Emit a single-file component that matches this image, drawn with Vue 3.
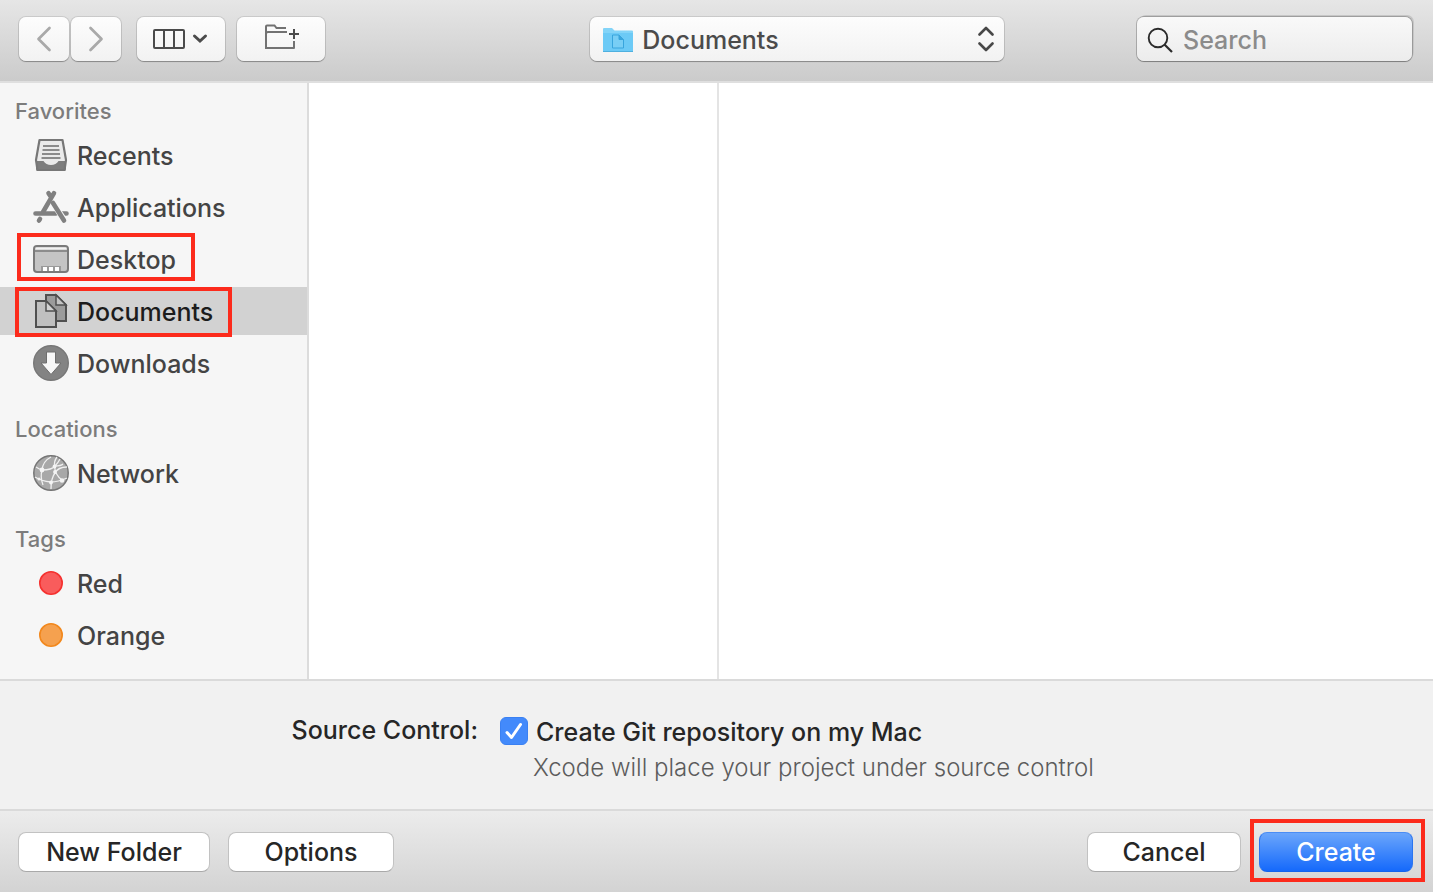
<template>
  <div class="dialog">
    <header class="toolbar">
      <div class="nav">
        <button type="button" class="tool nav-btn" aria-label="Back">
          <svg width="50" height="44" viewBox="0 0 50 44">
            <path d="M30.500 11 19.500 22l11 11" fill="none" stroke="#a9a9a9" stroke-width="2.700" stroke-linecap="round" stroke-linejoin="round" />
          </svg>
        </button>
        <button type="button" class="tool nav-btn" aria-label="Forward">
          <svg width="50" height="44" viewBox="0 0 50 44">
            <path d="M19.500 11 30.500 22l-11 11" fill="none" stroke="#a9a9a9" stroke-width="2.700" stroke-linecap="round" stroke-linejoin="round" />
          </svg>
        </button>
      </div>
      <button type="button" class="tool view-btn" aria-label="View as columns">
        <svg width="88" height="44" viewBox="0 0 88 44" fill="none" stroke="#4b4b4b" stroke-width="2">
          <rect x="17" y="13" width="30" height="18" rx="1" />
          <path d="M27 13v18M37 13v18" />
          <path d="M57.500 19l5.500 5 5.500-5" stroke-width="3" stroke-linecap="round" />
        </svg>
      </button>
      <button type="button" class="tool folder-btn" aria-label="New folder">
        <svg width="88" height="44" viewBox="0 0 88 44" fill="none" stroke="#727272" stroke-width="2">
          <path d="M29 32V9.500q0-1 1-1h7.500l2 2.500H49" />
          <path d="M29 17q0-2 2-2h19" />
          <path d="M29 31h28v-7" stroke-linejoin="round" />
          <path d="M57 12v10M52 17h10" stroke="#4b4b4b" />
        </svg>
      </button>

      <span class="spacer-left"></span>
      <div class="location">
        <svg class="location-icon" width="32" height="28" viewBox="0 0 32 28">
          <path d="M1 2q0-1 1-1h8l2.500 2.500H30q1 0 1 1V24q0 1-1 1H2q-1 0-1-1z" fill="#83d4f8" />
          <path d="M1 6h30v18q0 1-1 1H2q-1 0-1-1z" fill="#6ccaf6" />
          <path d="M1 24.500h30" stroke="#4fb0df" />
          <path d="M10.500 8h6.500l4.500 4.500V21h-11zM17 8v4.500h4.500" fill="#78cef5" stroke="#38a5dd" />
          <path d="M17 8l4.500 4.500H17z" fill="#38a5dd" />
        </svg>
        <select v-model="location" class="tool location-select" aria-label="Location">
          <option>Documents</option>
        </select>
        <svg class="location-arrows" width="16" height="26" viewBox="0 0 16 26">
          <path d="M1.500 8.500 8 2l6.500 6.500M1.500 17.500 8 24l6.500-6.500" fill="none" stroke="#484848" stroke-width="2.600" stroke-linecap="round" stroke-linejoin="round" />
        </svg>
      </div>
      <span class="spacer-right"></span>

      <div class="search">
        <svg class="search-icon" width="28" height="28" viewBox="0 0 28 28">
          <circle cx="11" cy="11" r="9.300" fill="none" stroke="#2b2b2b" stroke-width="1.900" />
          <path d="M17.500 17.500 25 25" stroke="#2b2b2b" stroke-width="2.200" />
        </svg>
        <input v-model="query" type="text" class="tool search-input" placeholder="Search" aria-label="Search" />
      </div>
    </header>

    <main class="browser">
      <nav class="sidebar">
        <section v-for="group in groups" :key="group.title" class="group">
          <h2>{{ group.title }}</h2>
          <a
            v-for="item in group.items"
            :key="item.name"
            href="#"
            class="item"
            :class="{ selected: item.name === location }"
          >
            <svg width="36" height="36" viewBox="0 0 36 36">
              <g v-if="item.icon === 'recents'">
                <path d="M7.500 3h21l3 19v10q0 1-1 1h-25q-1 0-1-1V22z" fill="#eaeaea" />
                <path d="M3 24h7.500q2.500 4 7.500 4t7.500-4H33v8l-1 2H4l-1-2z" fill="#7d7d7d" />
                <path d="M6.500 3h23L33 23l-1.500 10h-27L3 23z" fill="none" stroke="#777" stroke-width="2.200" stroke-linejoin="round" />
                <path d="M10 9h16M9.500 13h17M9 17h18M8.500 21h19" stroke="#8b8b8b" stroke-width="2" />
              </g>
              <g v-else-if="item.icon === 'applications'" fill="none" stroke="#808080" stroke-width="4.600" stroke-linecap="round">
                <path d="M2.500 24.500H23M29 24.500h4.500" />
                <path d="M19 12.500 31.500 31.500" stroke="#f6f6f6" stroke-width="6" stroke-linecap="butt" />
                <path d="M15.500 4.200l2 3M21 4.200 10 23M7 30l-1 1.500" />
                <path d="M20 14 31 31.500" />
              </g>
              <g v-else-if="item.icon === 'desktop'">
                <rect x="1" y="5" width="34" height="26" rx="3" fill="#c4c4c4" stroke="#7a7a7a" stroke-width="2" />
                <path d="M2.500 7.500h31" stroke="#f2f2f2" stroke-width="2" />
                <path d="M2 10h32" stroke="#7a7a7a" stroke-width="1.500" />
                <path d="M8 25h20v5H8z" fill="#9a9a9a" />
                <path d="M10 26h4v4h-4zM16 26h4v4h-4zM22 26h4v4h-4z" fill="#fff" />
              </g>
              <g v-else-if="item.icon === 'documents'" stroke="#505050" stroke-width="2">
                <path d="M13 2h10l10 10v16H13z" fill="#9b9b9b" />
                <path d="M23 2v10h10z" fill="#c4c4c4" stroke-width="1.500" />
                <path d="M3 8h10l10 10v16H3z" fill="#c0c0c0" />
                <path d="M13 8v10h10z" fill="#d2d2d2" stroke-width="1.500" />
              </g>
              <g v-else-if="item.icon === 'downloads'">
                <circle cx="18" cy="18" r="17.300" fill="#838383" stroke="#777" stroke-width="1.400" />
                <path d="M13.500 7h9v11h5.500L18 29.500 8 18h5.500z" fill="#f7f7f7" stroke="#6e6e6e" />
              </g>
              <g v-else-if="item.icon === 'network'">
                <circle cx="18" cy="18" r="17.200" fill="#a8a8a8" stroke="#757575" stroke-width="1.500" />
                <g fill="none" stroke="#f0f0f0" stroke-width="1.300">
                  <path d="M3 12q3 2 6 3Q10 6 18 2M9 15q10 0 13-4 3-3 5-7M9 15q-2 7 1 15M24 2q-3 4-2.500 9 .5 9 7.500 14M34 12q-9 0-12 6-4 5-4 16M2 22q6 4 16 5 7 0 16-4M22 11q6 0 8-2" />
                </g>
                <g fill="#f4f4f4">
                  <circle cx="9" cy="15" r="2.400" />
                  <circle cx="21.500" cy="11.500" r="1.900" />
                  <circle cx="22" cy="17" r="1.900" />
                  <circle cx="6" cy="24" r="1.500" />
                  <circle cx="18" cy="27.500" r="1.900" />
                  <circle cx="29" cy="25.500" r="2.300" />
                </g>
              </g>
              <circle v-else-if="item.icon === 'red'" cx="18" cy="18" r="11.200" fill="#f95c5c" stroke="#f5312f" stroke-width="1.600" />
              <circle v-else cx="18" cy="18" r="11.200" fill="#f5a14f" stroke="#f2881d" stroke-width="1.600" />
            </svg>
            <span class="item-name">{{ item.name }}</span>
            <i v-if="item.mark" class="mark" :class="item.mark"></i>
          </a>
        </section>
      </nav>
      <div class="column"></div>
      <div class="column rest"></div>
    </main>

    <section class="accessory">
      <span class="accessory-label">Source Control:</span>
      <div>
        <label class="check">
          <span class="check-box">
            <input v-model="createGit" type="checkbox" />
            <svg v-if="createGit" width="28" height="28" viewBox="0 0 28 28">
              <path d="M7 15.500l4.500 5L20.500 7.500" fill="none" stroke="#fff" stroke-width="3" stroke-linecap="round" stroke-linejoin="round" />
            </svg>
          </span>
          <span class="item-name">Create Git repository on my Mac</span>
        </label>
        <p class="hint">Xcode will place your project under source control</p>
      </div>
    </section>

    <footer class="actions">
      <button type="button" class="push new-folder">New Folder</button>
      <button type="button" class="push options">Options</button>
      <span class="fill"></span>
      <button type="button" class="push">Cancel</button>
      <div class="create-wrap">
        <button type="button" class="push primary">Create</button>
        <i class="mark mark-create"></i>
      </div>
    </footer>
  </div>
</template>

<script setup>
import {ref} from "vue";

const location = ref("Documents");
const query = ref("");
const createGit = ref(true);

const groups = [
  {
    title: "Favorites",
    items: [
      {name: "Recents", icon: "recents"},
      {name: "Applications", icon: "applications"},
      {name: "Desktop", icon: "desktop", mark: "mark-desktop"},
      {name: "Documents", icon: "documents", mark: "mark-documents"},
      {name: "Downloads", icon: "downloads"},
    ],
  },
  {
    title: "Locations",
    items: [{name: "Network", icon: "network"}],
  },
  {
    title: "Tags",
    items: [
      {name: "Red", icon: "red"},
      {name: "Orange", icon: "orange"},
    ],
  },
];
</script>

<style>
body {
  margin: 0;
}
</style>

<style scoped>
* {
  box-sizing: border-box;
}

.dialog {
  display: flex;
  flex-direction: column;
  min-height: 100vh;
  font-family: Inter, "Liberation Sans", sans-serif;
  font-size: 25px;
  font-weight: 450;
  color: #262626;
  background: #f1f1f1;
}

svg {
  display: block;
  flex: none;
}

/* Toolbar */
.toolbar {
  display: flex;
  align-items: center;
  padding: 17px 21px 20px 19px;
  background: linear-gradient(#e6e6e6, #cbcbcb);
  border-bottom: 2px solid #dfdfdf;
}

.tool {
  height: 44px;
  padding: 0;
  border: 0;
  border-radius: 7px;
  background: linear-gradient(#fdfdfd, #f2f2f2);
  box-shadow: 0 0 0 1px rgba(0, 0, 0, 0.1), 0 1px 1px rgba(0, 0, 0, 0.28);
  font: inherit;
}

.nav {
  display: flex;
  gap: 2px;
  margin-right: 16px;
}

.nav-btn {
  width: 50px;
}

.view-btn,
.folder-btn {
  width: 88px;
}

.view-btn {
  margin-right: 12px;
}

.spacer-left {
  flex: 2;
}

.spacer-right {
  flex: 1;
}

.location,
.search {
  position: relative;
}

.location-select {
  display: block;
  width: 414px;
  padding: 2px 52px 0;
  color: #4b4b4b;
  appearance: none;
}

.location-icon {
  position: absolute;
  top: 10px;
  left: 12px;
}

.location-arrows {
  position: absolute;
  top: 9px;
  right: 10px;
  pointer-events: none;
}

.search-input {
  display: block;
  width: 275px;
  padding: 2px 12px 0 46px;
  color: #333;
  background: linear-gradient(#f9f9f9, #ececec);
  box-shadow: 0 0 0 1px rgba(0, 0, 0, 0.2), 0 1px 1px rgba(0, 0, 0, 0.25), 2px -2px 0 #c6c6c6;
}

.search-input::placeholder {
  color: #8b8b8b;
  opacity: 1;
}

.search-icon {
  position: absolute;
  top: 10px;
  left: 10px;
}

/* File browser */
.browser {
  display: flex;
  flex: 1;
  background: #fff;
  border-bottom: 2px solid #dadada;
}

.sidebar {
  flex: none;
  width: 309px;
  padding: 14px 0 20px;
  background: #f6f6f6;
  border-right: 2px solid #dcdcdc;
}

.group + .group {
  margin-top: 28px;
}

.group h2 {
  margin: 0 0 6px;
  padding-left: 15px;
  font-size: 22px;
  font-weight: 550;
  line-height: 28px;
  color: #7c7c7c;
}

.item {
  position: relative;
  display: flex;
  align-items: center;
  gap: 8px;
  height: 48px;
  padding-left: 33px;
  color: #444;
  text-decoration: none;
}

.item + .item {
  margin-top: 4px;
}

.item-name {
  padding-top: 2px;
}

.selected {
  color: #1c1c1c;
  background: #d2d2d2;
}

.column {
  flex: none;
  width: 410px;
  border-right: 2px solid #e4e4e4;
}

.rest {
  flex: 1;
  border-right: 0;
}

/* Red frames round the places to click */
.mark {
  position: absolute;
  border: 4px solid #fc2b1c;
  pointer-events: none;
}

.mark-desktop {
  top: -2px;
  left: 17px;
  width: 178px;
  height: 48px;
}

.mark-documents {
  top: 0;
  left: 15px;
  width: 217px;
  height: 50px;
}

.mark-create {
  top: -13px;
  right: -12px;
  bottom: -10px;
  left: -9px;
}

/* Source control */
.accessory {
  display: grid;
  grid-template-columns: 478px 1fr;
  gap: 22px;
  padding: 31px 0 23px;
  line-height: 36px;
  border-bottom: 2px solid #dadada;
}

.accessory-label {
  text-align: right;
}

.check {
  display: flex;
  align-items: center;
  gap: 8px;
}

.check-box {
  display: grid;
}

.check-box > * {
  grid-area: 1 / 1;
}

.check-box svg {
  pointer-events: none;
}

.check-box input {
  width: 28px;
  height: 28px;
  margin: 0;
  border: 1px solid #b5b5b5;
  border-radius: 6px;
  background: #fff;
  appearance: none;
}

.check-box input:checked {
  border-color: #3a80f2;
  background: #438afb;
}

.hint {
  margin: 0;
  padding-left: 33px;
  font-size: 24px;
  font-weight: 360;
  line-height: 36px;
  color: #5c5c5c;
}

/* Bottom buttons */
.actions {
  display: flex;
  gap: 18px;
  padding: 21px 20px 20px 18px;
  background: linear-gradient(#ececec, #d3d3d3);
}

.push {
  width: 154px;
  height: 40px;
  padding: 0;
  border: 1px solid #c2c2c2;
  border-bottom-color: #a9a9a9;
  border-radius: 8px;
  background: #fff;
  color: #262626;
  font: inherit;
}

.new-folder {
  width: 192px;
}

.options {
  width: 166px;
}

.fill {
  flex: 1;
}

.create-wrap {
  position: relative;
}

.primary {
  display: block;
  border-color: #4a8df5 #2a75f0 #1464ee;
  background: linear-gradient(#6ba6fb, #1569fb);
  color: #fff;
}
</style>
